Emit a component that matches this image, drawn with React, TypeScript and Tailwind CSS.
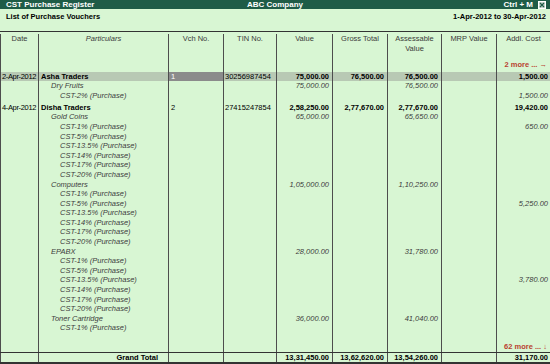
import React from "react";

type Line = {
  date?: string;
  name?: string;
  level?: 0 | 1 | 2;
  vch?: string;
  tin?: string;
  value?: string;
  gross?: string;
  assess?: string;
  addl?: string;
  hl?: boolean;
};

const grid = "grid grid-cols-[38px_130px_55px_53px_56px_55px_54px_55px_1fr]";
const cell = "border-l border-[#4d4d4d] overflow-hidden whitespace-nowrap";

const taxes = ["CST-1%", "CST-5%", "CST-13.5%", "CST-14%", "CST-17%", "CST-20%"];

function taxLines(addlAt?: number, addl?: string): Line[] {
  return taxes.map((t, i) => ({
    name: `${t} (Purchase)`,
    level: 2,
    addl: i === addlAt ? addl : undefined,
  }));
}

const asha: Line[] = [
  {
    date: "2-Apr-2012",
    name: "Asha Traders",
    level: 0,
    vch: "1",
    tin: "30256987454",
    value: "75,000.00",
    gross: "76,500.00",
    assess: "76,500.00",
    addl: "1,500.00",
    hl: true,
  },
  { name: "Dry Fruits", level: 1, value: "75,000.00", assess: "76,500.00" },
  { name: "CST-2% (Purchase)", level: 2, addl: "1,500.00" },
];

const disha: Line[] = [
  {
    date: "4-Apr-2012",
    name: "Disha Traders",
    level: 0,
    vch: "2",
    tin: "27415247854",
    value: "2,58,250.00",
    gross: "2,77,670.00",
    assess: "2,77,670.00",
    addl: "19,420.00",
  },
  { name: "Gold Coins", level: 1, value: "65,000.00", assess: "65,650.00" },
  ...taxLines(0, "650.00"),
  { name: "Computers", level: 1, value: "1,05,000.00", assess: "1,10,250.00" },
  ...taxLines(1, "5,250.00"),
  { name: "EPABX", level: 1, value: "28,000.00", assess: "31,780.00" },
  ...taxLines(2, "3,780.00"),
  { name: "Toner Cartridge", level: 1, value: "36,000.00", assess: "41,040.00" },
  { name: "CST-1% (Purchase)", level: 2 },
];

function Row({ line }: { line: Line }) {
  const bold = line.level === 0;
  const amt = bold ? "font-bold text-black" : "italic text-[#3c3c3c]";
  const pad = line.level === 0 ? "pl-[2px] font-bold text-black" : line.level === 1 ? "pl-[12px] italic text-[#3c3c3c]" : "pl-[21px] italic text-[#3c3c3c]";
  return (
    <div className={`${grid} h-[9.6px] leading-[9.6px] ${line.hl ? "bg-[#b8c9b4]" : ""}`}>
      <div className={`${cell} pl-px tracking-[-0.35px]`}>{line.date}</div>
      <div className={`${cell} ${pad}`}>{line.name}</div>
      <div className={`${cell} pl-[2px] ${line.hl ? "bg-[#8b8b8b] text-white" : ""}`}>{line.vch}</div>
      <div className={`${cell} pl-px`}>{line.tin}</div>
      <div className={`${cell} pr-[3px] text-right ${amt}`}>{line.value}</div>
      <div className={`${cell} pr-[3px] text-right ${amt}`}>{line.gross}</div>
      <div className={`${cell} pr-[3px] text-right ${amt}`}>{line.assess}</div>
      <div className={cell}></div>
      <div className={`${cell} pr-[2px] text-right ${amt}`}>{line.addl}</div>
    </div>
  );
}

function Blank({ className }: { className: string }) {
  return (
    <div className={`${grid} ${className}`}>
      {Array.from({ length: 9 }).map((_, i) => (
        <div key={i} className={cell}></div>
      ))}
    </div>
  );
}

function More({ label, arrow }: { label: string; arrow: string }) {
  return (
    <div className={`${grid} h-[9.6px] leading-[9.6px]`}>
      {Array.from({ length: 8 }).map((_, i) => (
        <div key={i} className={cell}></div>
      ))}
      <div className={`${cell} pr-[3px] text-right font-bold text-[#b8412f]`}>
        {label} {arrow}
      </div>
    </div>
  );
}

export default function App() {
  return (
    <div className="w-[550px] h-[364px] flex flex-col bg-[#d8f6d3] text-black text-[7.5px] font-['Liberation_Sans',Arial,sans-serif] overflow-hidden">
      {/* title bar */}
      <div className="h-[9px] flex items-center bg-[#1f5c47] text-white text-[8px] font-bold leading-[9px] px-[6px]">
        <span className="flex-1">CST Purchase Register</span>
        <span>ABC Company</span>
        <div className="flex-1 flex justify-end items-center gap-[5px]">
          <span>Ctrl + M</span>
          <svg width="8" height="8" viewBox="0 0 8 8" className="mr-[-2px]">
            <rect x="0.5" y="0.5" width="7" height="7" fill="#c9d6cf" stroke="#ffffff" />
            <path d="M2 2 L6 6 M6 2 L2 6" stroke="#1f5c47" strokeWidth="1.2" />
          </svg>
        </div>
      </div>

      {/* sub header */}
      <div className="h-[23px] flex justify-between items-start pt-[3px] pl-[6px] pr-[4px] font-bold leading-[9px] border-b border-[#333]">
        <span>List of Purchase Vouchers</span>
        <span>1-Apr-2012 to 30-Apr-2012</span>
      </div>

      {/* column headers */}
      <div className={`${grid} h-[28px] pt-[2px] leading-[9.6px] text-center text-[#3a3a3a]`}>
        <div className={cell}>Date</div>
        <div className={`${cell} italic`}>Particulars</div>
        <div className={cell}>Vch No.</div>
        <div className={cell}>TIN No.</div>
        <div className={cell}>Value</div>
        <div className={cell}>Gross Total</div>
        <div className={cell}>
          Assessable
          <br />
          Value
        </div>
        <div className={cell}>MRP Value</div>
        <div className={cell}>Addl. Cost</div>
      </div>

      <More label="2 more ..." arrow="→" />
      <Blank className="h-[2.2px]" />
      {asha.map((l, i) => (
        <Row key={`a${i}`} line={l} />
      ))}
      <Blank className="h-[2.2px]" />
      {disha.map((l, i) => (
        <Row key={`d${i}`} line={l} />
      ))}
      <Blank className="flex-1" />
      <More label="62 more ..." arrow="↓" />

      {/* grand total */}
      <div className={`${grid} h-[12px] leading-[9px] font-bold border-t border-b-2 border-[#333]`}>
        <div className={cell}></div>
        <div className={`${cell} text-right pr-[10px]`}>Grand Total</div>
        <div className={cell}></div>
        <div className={cell}></div>
        <div className={`${cell} text-right pr-[3px]`}>13,31,450.00</div>
        <div className={`${cell} text-right pr-[3px]`}>13,62,620.00</div>
        <div className={`${cell} text-right pr-[3px]`}>13,54,260.00</div>
        <div className={cell}></div>
        <div className={`${cell} text-right pr-[2px]`}>31,170.00</div>
      </div>
    </div>
  );
}
